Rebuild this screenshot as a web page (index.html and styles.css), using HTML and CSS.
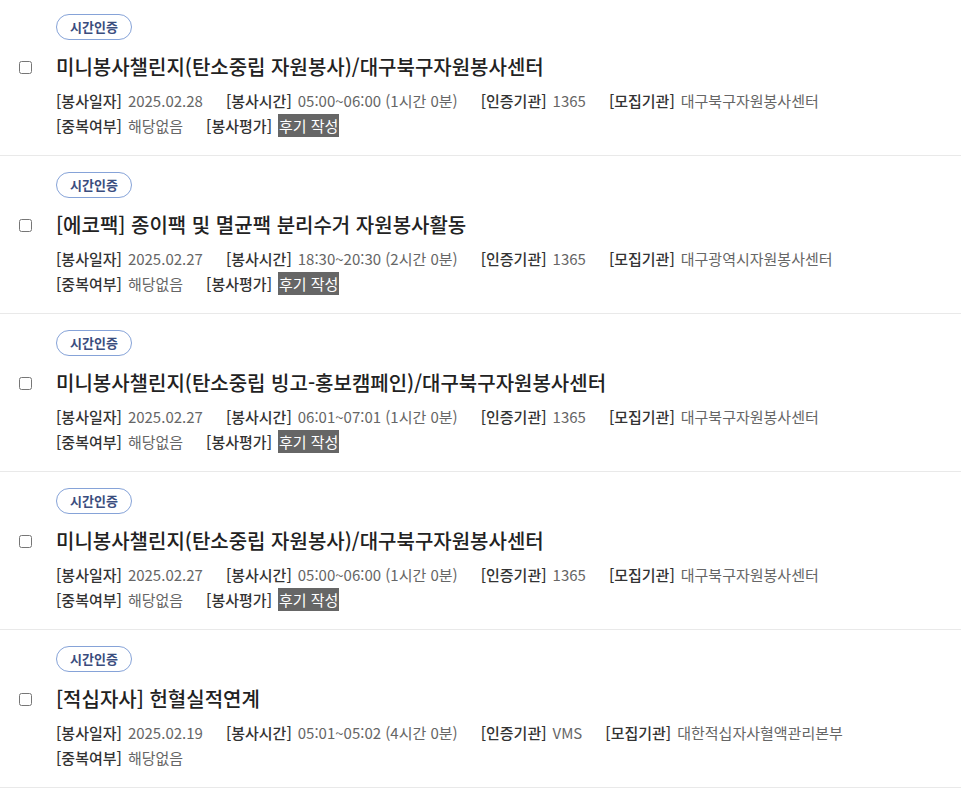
FILE: index.html
```html
<!DOCTYPE html>
<html lang="ko">

<head>
    <meta charset="UTF-8">
    <meta name="viewport" content="width=device-width, initial-scale=1.0">
    <title>봉사실적</title>
    <link rel="stylesheet" href="styles.css">
</head>

<body>
    <ul class="actList">
        <li class="actItem">
            <span class="badge">시간인증</span>
            <input type="checkbox" class="chk">
            <h3 class="actTitle">미니봉사챌린지(탄소중립 자원봉사)/대구북구자원봉사센터</h3>
            <div class="meta">
                <p><span class="lbl">[봉사일자]</span><span class="val">2025.02.28</span><span class="lbl">[봉사시간]</span><span class="val">05:00~06:00 (1시간 0분)</span><span class="lbl">[인증기관]</span><span class="val">1365</span><span class="lbl">[모집기관]</span><span class="val">대구북구자원봉사센터</span></p>
                <p><span class="lbl">[중복여부]</span><span class="val">해당없음</span><span class="lbl">[봉사평가]</span><a class="review">후기 작성</a></p>
            </div>
        </li>
        <li class="actItem">
            <span class="badge">시간인증</span>
            <input type="checkbox" class="chk">
            <h3 class="actTitle">[에코팩] 종이팩 및 멸균팩 분리수거 자원봉사활동</h3>
            <div class="meta">
                <p><span class="lbl">[봉사일자]</span><span class="val">2025.02.27</span><span class="lbl">[봉사시간]</span><span class="val">18:30~20:30 (2시간 0분)</span><span class="lbl">[인증기관]</span><span class="val">1365</span><span class="lbl">[모집기관]</span><span class="val">대구광역시자원봉사센터</span></p>
                <p><span class="lbl">[중복여부]</span><span class="val">해당없음</span><span class="lbl">[봉사평가]</span><a class="review">후기 작성</a></p>
            </div>
        </li>
        <li class="actItem">
            <span class="badge">시간인증</span>
            <input type="checkbox" class="chk">
            <h3 class="actTitle">미니봉사챌린지(탄소중립 빙고-홍보캠페인)/대구북구자원봉사센터</h3>
            <div class="meta">
                <p><span class="lbl">[봉사일자]</span><span class="val">2025.02.27</span><span class="lbl">[봉사시간]</span><span class="val">06:01~07:01 (1시간 0분)</span><span class="lbl">[인증기관]</span><span class="val">1365</span><span class="lbl">[모집기관]</span><span class="val">대구북구자원봉사센터</span></p>
                <p><span class="lbl">[중복여부]</span><span class="val">해당없음</span><span class="lbl">[봉사평가]</span><a class="review">후기 작성</a></p>
            </div>
        </li>
        <li class="actItem">
            <span class="badge">시간인증</span>
            <input type="checkbox" class="chk">
            <h3 class="actTitle">미니봉사챌린지(탄소중립 자원봉사)/대구북구자원봉사센터</h3>
            <div class="meta">
                <p><span class="lbl">[봉사일자]</span><span class="val">2025.02.27</span><span class="lbl">[봉사시간]</span><span class="val">05:00~06:00 (1시간 0분)</span><span class="lbl">[인증기관]</span><span class="val">1365</span><span class="lbl">[모집기관]</span><span class="val">대구북구자원봉사센터</span></p>
                <p><span class="lbl">[중복여부]</span><span class="val">해당없음</span><span class="lbl">[봉사평가]</span><a class="review">후기 작성</a></p>
            </div>
        </li>
        <li class="actItem">
            <span class="badge">시간인증</span>
            <input type="checkbox" class="chk">
            <h3 class="actTitle">[적십자사] 헌혈실적연계</h3>
            <div class="meta">
                <p><span class="lbl">[봉사일자]</span><span class="val">2025.02.19</span><span class="lbl">[봉사시간]</span><span class="val">05:01~05:02 (4시간 0분)</span><span class="lbl">[인증기관]</span><span class="val">VMS</span><span class="lbl">[모집기관]</span><span class="val">대한적십자사혈액관리본부</span></p>
                <p><span class="lbl">[중복여부]</span><span class="val">해당없음</span></p>
            </div>
        </li>
    </ul>
</body>

</html>
```

FILE: styles.css
```css
*{margin: 0px;padding: 0px;box-sizing: border-box;font-family: "Noto Sans CJK KR", "Noto Sans", sans-serif;}
body{background: #fff;color: #222;}
.actList{list-style-type: none;width: 961px;margin-top: -2px;}
.actItem{display: grid;grid-template-columns: 56px 1fr;padding: 16px 0px 17px 0px;border-bottom: 1px solid #e9e9e9;}
.badge{grid-column: 2;justify-self: start;height: 26px;line-height: 24px;padding: 0px 13px;margin-bottom: 13px;border: 1px solid #86a3d8;border-radius: 13px;font-size: 13px;font-weight: 700;color: #3a4d7e;}
.chk{grid-column: 1;grid-row: 2;align-self: center;justify-self: start;margin: 0px 0px 0px 19px;width: 13px;height: 13px;}
.actTitle{grid-column: 2;grid-row: 2;font-size: 20px;line-height: 28px;font-weight: 500;color: #222;}
.meta{grid-column: 2;margin-top: 7px;font-size: 15px;line-height: 25px;}
.meta p{white-space: nowrap;height: 25px;}
.lbl{font-weight: 500;color: #333;margin-right: 6px;}
.val{color: #666;margin-right: 23px;}
.review{display: inline-block;background: #666;color: #fff;line-height: 23px;padding: 0px 1px;vertical-align: top;margin-top: 1px;}
```
